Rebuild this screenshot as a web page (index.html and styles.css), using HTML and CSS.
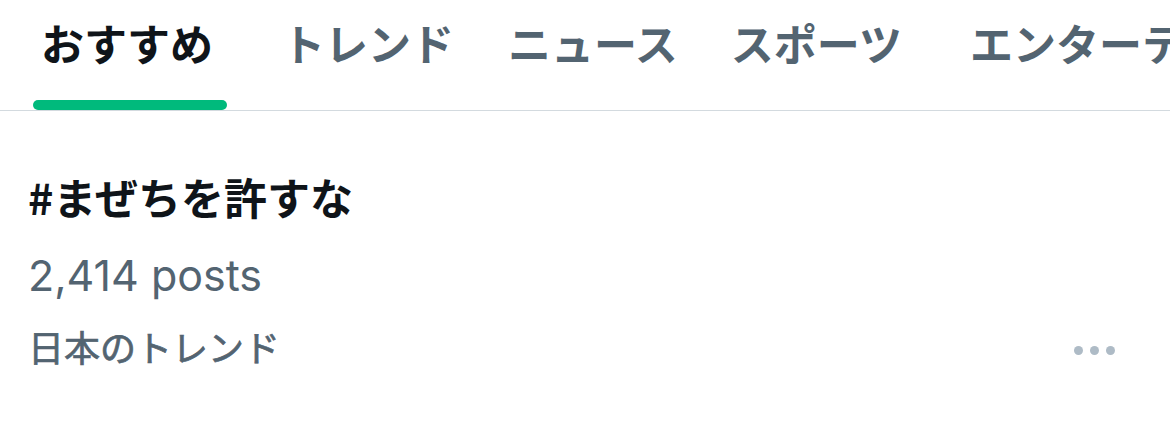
FILE: index.html
```html
<!DOCTYPE html>
<html lang="ja">
<head>
<meta charset="utf-8">
<link rel="stylesheet" href="styles.css">
</head>
<body>
<nav class="tabs">
  <div class="tab active"><span class="label">おすすめ</span><span class="bar"></span></div>
  <div class="tab"><span class="label">トレンド</span></div>
  <div class="tab"><span class="label">ニュース</span></div>
  <div class="tab"><span class="label">スポーツ</span></div>
  <div class="tab"><span class="label">エンターテ</span></div>
</nav>
<section class="trend">
  <div class="info">
    <div class="title">#まぜちを許すな</div>
    <div class="count">2,414 posts</div>
    <div class="context">日本のトレンド</div>
  </div>
  <div class="more"><span></span><span></span><span></span></div>
</section>
</body>
</html>
```
FILE: styles.css
```css
html, body {
  margin: 0;
  padding: 0;
  background: #fff;
  overflow: hidden;
  width: 1170px;
  height: 429px;
}
body {
  font-family: "Noto Sans CJK JP", "Noto Sans", sans-serif;
  color: #0f1419;
}
.tabs {
  display: flex;
  padding-left: 33px;
  height: 110px;
  border-bottom: 1px solid #d3dadf;
  white-space: nowrap;
  overflow: hidden;
}
.tab {
  position: relative;
  padding: 0 10px;
  flex: 0 0 auto;
}
.tab.active {
  padding: 0 14px 0 8px;
}
.tab:nth-child(2) { margin-left: 45px; }
.tab:nth-child(3) { margin-left: 34px; }
.tab:nth-child(4) { margin-left: 33px; }
.tab:nth-child(5) { margin-left: 48px; }
.tab .label {
  display: block;
  font-size: 43px;
  line-height: 1;
  font-weight: 700;
  color: #536471;
  padding-top: 21px;
}
.tab.active .label {
  color: #0f1419;
}
.tab .bar {
  position: absolute;
  left: 0;
  right: 0;
  bottom: 0;
  height: 10px;
  border-radius: 5px;
  background: #00ba7c;
}
.trend {
  display: flex;
  justify-content: space-between;
  padding: 0 55px 0 28px;
}
.title {
  font-size: 43px;
  font-weight: 700;
  line-height: 1;
  margin-top: 64px;
}
.count {
  font-family: Inter, "Noto Sans", sans-serif;
  font-size: 43px;
  line-height: 1;
  color: #536471;
  margin-top: 36px;
}
.context {
  font-size: 36px;
  font-weight: 400;
  -webkit-text-stroke: 0.7px #536471;
  line-height: 1;
  color: #536471;
  margin-top: 31px;
}
.more {
  display: flex;
  gap: 7px;
  align-self: flex-end;
  margin-bottom: 9px;
}
.more span {
  width: 9px;
  height: 9px;
  border-radius: 50%;
  background: #aebbc6;
}
```
